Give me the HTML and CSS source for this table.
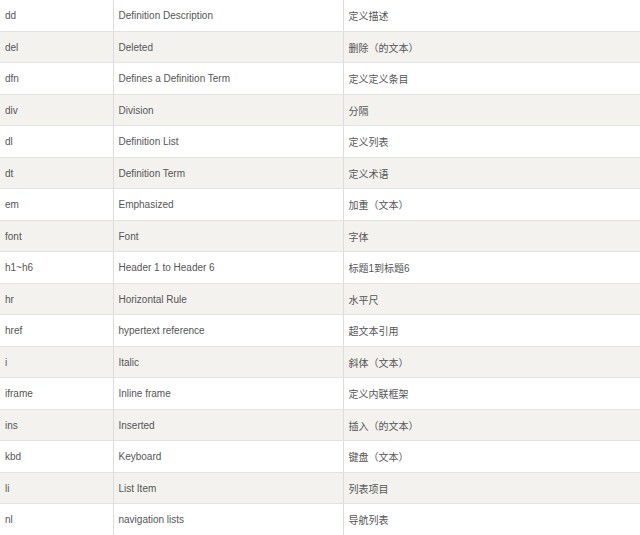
FILE: index.html
```html
<!DOCTYPE html>
<html lang="zh-CN">
<head>
<meta charset="utf-8">
<title>HTML 标签</title>
<link rel="stylesheet" href="styles.css">
</head>
<body>
<table class="tags">
<colgroup><col class="c1"><col class="c2"><col class="c3"></colgroup>
<tbody>
<tr><td>dd</td><td>Definition Description</td><td>定义描述</td></tr>
<tr><td>del</td><td>Deleted</td><td>删除（的文本）</td></tr>
<tr><td>dfn</td><td>Defines a Definition Term</td><td>定义定义条目</td></tr>
<tr><td>div</td><td>Division</td><td>分隔</td></tr>
<tr><td>dl</td><td>Definition List</td><td>定义列表</td></tr>
<tr><td>dt</td><td>Definition Term</td><td>定义术语</td></tr>
<tr><td>em</td><td>Emphasized</td><td>加重（文本）</td></tr>
<tr><td>font</td><td>Font</td><td>字体</td></tr>
<tr><td>h1~h6</td><td>Header 1 to Header 6</td><td>标题1到标题6</td></tr>
<tr><td>hr</td><td>Horizontal Rule</td><td>水平尺</td></tr>
<tr><td>href</td><td>hypertext reference</td><td>超文本引用</td></tr>
<tr><td>i</td><td>Italic</td><td>斜体（文本）</td></tr>
<tr><td>iframe</td><td>Inline frame</td><td>定义内联框架</td></tr>
<tr><td>ins</td><td>Inserted</td><td>插入（的文本）</td></tr>
<tr><td>kbd</td><td>Keyboard</td><td>键盘（文本）</td></tr>
<tr><td>li</td><td>List Item</td><td>列表项目</td></tr>
<tr><td>nl</td><td>navigation lists</td><td>导航列表</td></tr>
</tbody>
</table>
</body>
</html>
```
FILE: styles.css
```css
html, body {
  margin: 0;
  padding: 0;
  background: #ffffff;
  overflow: hidden;
}
.tags {
  border-collapse: collapse;
  table-layout: fixed;
  width: 100%;
  font-family: "Liberation Sans", Arial, "Noto Sans CJK SC", sans-serif;
  font-size: 10px;
  color: #555555;
}
.c1 { width: 113px; }
.c2 { width: 230px; }
.tags td {
  padding: 0 0 0 5px;
  height: 31px;
  border-right: 1px solid #dcdcdc;
  border-bottom: 1px solid #e2e2e0;
  vertical-align: middle;
  white-space: nowrap;
}
.tags td:last-child { border-right: none; }
.tags tr:nth-child(odd) td { height: 31px; }
.tags tr:nth-child(even) td {
  height: 30px;
  background: #f3f2ef;
}
```
